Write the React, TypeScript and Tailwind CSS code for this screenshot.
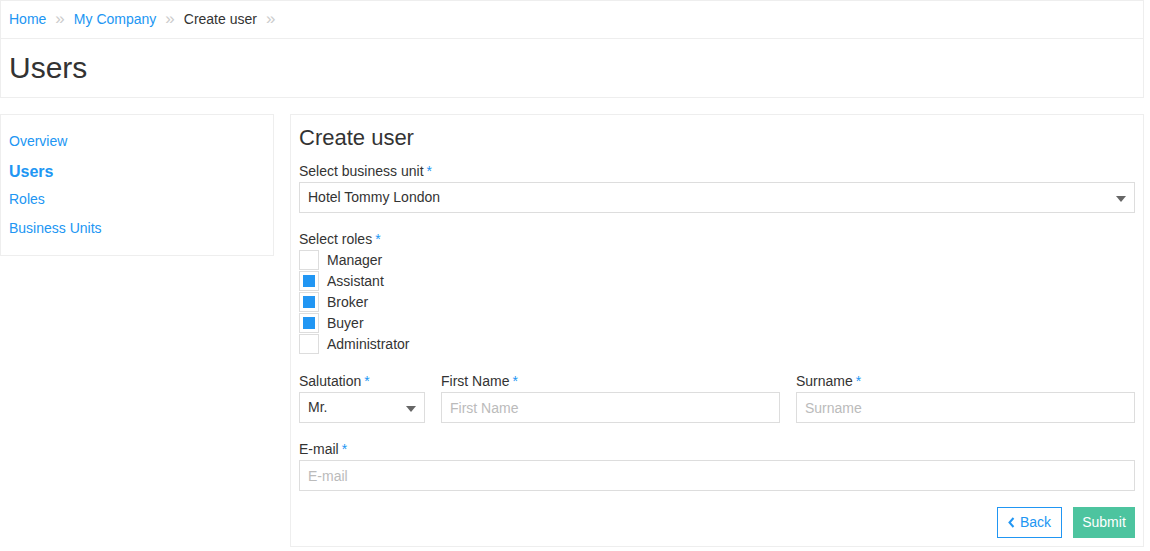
import React, { useState } from "react";

const roles = [
  { name: "Manager", checked: false },
  { name: "Assistant", checked: true },
  { name: "Broker", checked: true },
  { name: "Buyer", checked: true },
  { name: "Administrator", checked: false },
];

const Req = () => <span className="text-[#2196f3] ml-[3px]">*</span>;

const Caret = () => (
  <svg width="10" height="6" viewBox="0 0 10 6" className="absolute right-[8px] top-[13px]">
    <path d="M0 0 L10 0 L5 6 Z" fill="#666" />
  </svg>
);

const Sep = () => <span className="text-[#ccc] text-[17px] leading-none -mt-[2px]">»</span>;

// Main page: header with breadcrumbs, side menu and the create user form
const App: React.FC = () => {
  const [checked, setChecked] = useState(roles.map((r) => r.checked));

  return (
    <div className="w-[1144px] bg-white text-[14px] text-[#333] font-['Liberation_Sans',Arial,sans-serif]">
      <div className="border border-[#eee]">
        <div className="h-[38px] flex items-center px-[8px] border-b border-[#eee] gap-[9px]">
          <a className="text-[#2196f3]">Home</a>
          <Sep />
          <a className="text-[#2196f3]">My Company</a>
          <Sep />
          <span>Create user</span>
          <Sep />
        </div>
        <div className="h-[58px] flex items-center px-[8px]">
          <h1 className="text-[30px] leading-none">Users</h1>
        </div>
      </div>

      <div className="flex gap-[16px] mt-[16px] items-start">
        <div className="w-[274px] border border-[#eee] pt-[12px] pb-[12px] px-[8px]">
          <div className="h-[29px] flex items-center text-[#2196f3]">Overview</div>
          <div className="h-[29px] flex items-center text-[#2196f3] font-bold text-[16px] pt-[2px]">Users</div>
          <div className="h-[29px] flex items-center text-[#2196f3]">Roles</div>
          <div className="h-[29px] flex items-center text-[#2196f3]">Business Units</div>
        </div>

        <div className="flex-1 border border-[#eee] p-[8px]">
          <h2 className="text-[22px] leading-[28px] mt-[1px]">Create user</h2>

          <div className="mt-[9px] leading-[20px]">
            Select business unit
            <Req />
          </div>
          <div className="relative mt-[1px] h-[31px] border border-[#ddd] flex items-center px-[8px]">
            Hotel Tommy London
            <Caret />
          </div>

          <div className="mt-[16px] leading-[20px]">
            Select roles
            <Req />
          </div>
          <div className="flex flex-col gap-[1px] mt-[1px]">
            {roles.map((r, i) => (
              <label key={r.name} className="flex items-center h-[20px] cursor-pointer">
                <span
                  className="w-[20px] h-[20px] border border-[#ddd] flex items-center justify-center"
                  onClick={() => setChecked(checked.map((c, j) => (j === i ? !c : c)))}
                >
                  {checked[i] && <span className="w-[12px] h-[12px] bg-[#2196f3]" />}
                </span>
                <span className="ml-[8px]">{r.name}</span>
              </label>
            ))}
          </div>

          <div className="flex gap-[16px] mt-[17px]">
            <div className="w-[126px]">
              <div className="leading-[20px]">
                Salutation
                <Req />
              </div>
              <div className="relative mt-[1px] h-[31px] border border-[#ddd] flex items-center px-[8px]">
                Mr.
                <Caret />
              </div>
            </div>
            <div className="flex-1">
              <div className="leading-[20px]">
                First Name
                <Req />
              </div>
              <input
                placeholder="First Name"
                className="mt-[1px] w-full h-[31px] border border-[#ddd] px-[8px] placeholder:text-[#bbb] outline-none"
              />
            </div>
            <div className="flex-1">
              <div className="leading-[20px]">
                Surname
                <Req />
              </div>
              <input
                placeholder="Surname"
                className="mt-[1px] w-full h-[31px] border border-[#ddd] px-[8px] placeholder:text-[#bbb] outline-none"
              />
            </div>
          </div>

          <div className="mt-[16px] leading-[20px]">
            E-mail
            <Req />
          </div>
          <input
            placeholder="E-mail"
            className="mt-[1px] w-full h-[31px] border border-[#ddd] px-[8px] placeholder:text-[#bbb] outline-none"
          />

          <div className="flex justify-end gap-[11px] mt-[16px]">
            <button className="h-[31px] w-[65px] border border-[#2196f3] text-[#2196f3] flex items-center justify-center gap-[5px]">
              <svg width="7" height="11" viewBox="0 0 7 11">
                <path d="M5.5 1 L1.5 5.5 L5.5 10" stroke="#2196f3" strokeWidth="2" fill="none" />
              </svg>
              Back
            </button>
            <button className="h-[31px] w-[62px] bg-[#4dc49f] text-white">Submit</button>
          </div>
        </div>
      </div>
    </div>
  );
};

export default App;
